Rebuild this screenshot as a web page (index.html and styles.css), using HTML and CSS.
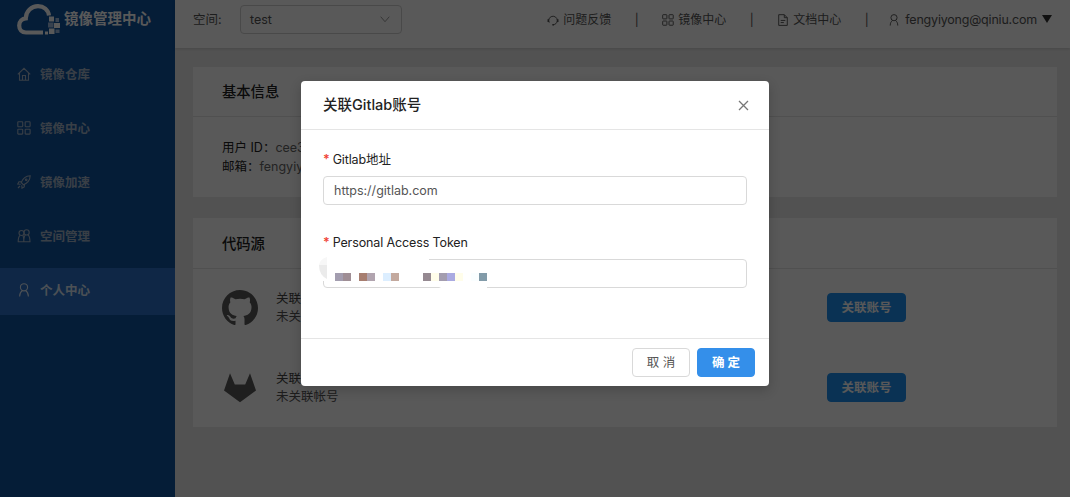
FILE: index.html
```
<!DOCTYPE html>
<html lang="zh-CN">
<head>
<meta charset="utf-8">
<title>镜像管理中心</title>
<link rel="stylesheet" href="styles.css">
</head>
<body>
<svg class="defs" width="0" height="0">
  <symbol id="i-grid" viewBox="0 0 14 14"><rect x=".8" y=".8" width="4.9" height="4.9" rx=".6"/><rect x="8.2" y=".8" width="4.9" height="4.9" rx=".6"/><rect x=".8" y="8.2" width="4.9" height="4.9" rx=".6"/><rect x="8.2" y="8.2" width="4.9" height="4.9" rx=".6"/></symbol>
  <symbol id="i-user" viewBox="0 0 14 14"><circle cx="7" cy="4.300" r="3.600"/><path d="M2.600 13.500c0-3 1-4.800 2.800-6M11.400 13.500c0-3-1-4.800-2.800-6"/></symbol>
</svg>
<div class="app">
  <aside class="sidebar">
    <div class="brand">
      <svg class="brand-logo" viewBox="0 0 44 32">
        <path class="cloud" d="M26 28.500H9C4.800 28.500 2.200 25.500 2.200 21.500c0-4.300 3-7 6.600-7.200C9 7 14.500 2.200 21 2.200c5.600 0 10 3.500 11 9.300"/>
        <path class="bits" d="M32 12.500h5v5h-5zM37 19h6v5h-6zM32 24.500h5.500v5.500H32zM28 27.500h3v3h-3z"/>
        <path class="bits-soft" d="M31 18.500h5.500v5H31zM38.500 14h3.500v4h-3.500zM38.500 25.500h4v3.500h-4z"/>
      </svg>
      <span class="brand-name">镜像管理中心</span>
    </div>
    <nav class="menu">
      <a class="menu-item"><svg class="icon" viewBox="0 0 14 14"><path d="M.8 7.400 7 1.300l6.200 6.100M2.500 6v7.200h9V6M5.500 13V8.500h3V13"/></svg><span>镜像仓库</span></a>
      <a class="menu-item"><svg class="icon"><use href="#i-grid"/></svg><span>镜像中心</span></a>
      <a class="menu-item"><svg class="icon" viewBox="0 0 14 14"><path d="M4.200 7.500C5.800 3.500 9 1 13.200.8c-.2 4.200-2.700 7.400-6.700 9zM4.500 6.500 2 6.800.8 9l3 .2M7.500 9.500 7.200 12 5 13.200l-.2-3M3 11l-2 2"/><circle cx="9.200" cy="4.800" r=".8"/></svg><span>镜像加速</span></a>
      <a class="menu-item"><svg class="icon" viewBox="0 0 14 14"><circle cx="4.500" cy="4" r="2.500"/><circle cx="9.600" cy="3.400" r="2.600"/><path d="M3 6.500C1.700 7.500 1.200 9 1.200 12.800h5.600C6.800 9 6.600 7.500 5.800 6.400M8.200 6c-1 1.300-1.400 3-1.400 6.800H13c0-3.800-.5-5.500-1.900-7"/></svg><span>空间管理</span></a>
      <a class="menu-item active"><svg class="icon"><use href="#i-user"/></svg><span>个人中心</span></a>
    </nav>
  </aside>
  <div class="main">
    <header class="topbar">
      <span class="space-label">空间:</span>
      <div class="select"><span>test</span><svg class="chevron" viewBox="0 0 10 7"><path d="M.7.7 5 5.700 9.300.7"/></svg></div>
      <div class="links">
        <a class="link"><svg class="icon" viewBox="0 0 14 14"><path d="M2.600 10A5 5 0 1 1 12 7.500C11.900 10.500 10 12.300 7 12.500"/><path class="thick" d="M1.500 6v3.200M12.500 6v3.200M6.200 12.500h2"/></svg>问题反馈</a>
        <i class="bar">|</i>
        <a class="link"><svg class="icon"><use href="#i-grid"/></svg>镜像中心</a>
        <i class="bar">|</i>
        <a class="link"><svg class="icon" viewBox="0 0 14 14"><path d="M2 .8h6.500L12 4.300v9H2zM8.500.8v3.500H12M4.300 7.500h5.400M4.300 10h3.700"/></svg>文档中心</a>
        <i class="bar">|</i>
        <a class="link user"><svg class="icon"><use href="#i-user"/></svg><span class="email">fengyiyong@qiniu.com</span><b class="caret"></b></a>
      </div>
    </header>
    <section class="card">
      <h2 class="card-title">基本信息</h2>
      <div class="info">
        <p><span class="key">用户 ID：</span>cee3</p>
        <p><span class="key">邮箱：</span>fengyiy</p>
      </div>
    </section>
    <section class="card sources">
      <h2 class="card-title">代码源</h2>
      <div class="source">
        <svg class="source-logo" viewBox="0 0 16 16"><path d="M8 0C3.580 0 0 3.580 0 8c0 3.540 2.290 6.530 5.470 7.590.4.070.55-.17.55-.38 0-.19-.01-.82-.01-1.490-2.010.37-2.530-.49-2.690-.94-.09-.23-.48-.94-.82-1.130-.28-.15-.68-.52-.01-.53.63-.01 1.080.58 1.230.82.72 1.210 1.870.87 2.330.66.07-.52.28-.87.51-1.070-1.780-.2-3.640-.89-3.640-3.950 0-.87.31-1.590.82-2.150-.08-.2-.36-1.020.08-2.120 0 0 .67-.21 2.200.82.64-.18 1.320-.27 2-.27s1.360.09 2 .27c1.530-1.040 2.200-.82 2.200-.82.44 1.100.16 1.920.08 2.120.51.56.82 1.270.82 2.150 0 3.070-1.870 3.750-3.650 3.950.29.25.54.73.54 1.480 0 1.070-.01 1.930-.01 2.200 0 .21.15.46.55.38A8.010 8.010 0 0 0 16 8c0-4.420-3.580-8-8-8z"/></svg>
        <div class="source-text"><p>关联</p><p>未关</p></div>
        <button class="btn primary link-btn">关联账号</button>
      </div>
      <div class="source">
        <svg class="source-logo" viewBox="0 0 36 36"><path d="M8 3.200 2 20.500 18 32.300l16-11.800L28 3.200 23.200 14.500H12.800z"/></svg>
        <div class="source-text"><p>关联</p><p>未关联帐号</p></div>
        <button class="btn primary link-btn">关联账号</button>
      </div>
    </section>
  </div>
</div>
<div class="mask">
  <div class="modal">
    <div class="modal-head"><span>关联Gitlab账号</span><svg class="close" viewBox="0 0 11 11"><path d="m1 1 9 9M10 1l-9 9"/></svg></div>
    <div class="modal-body">
      <label class="label"><em>*</em>Gitlab地址</label>
      <div class="input">https://gitlab.com</div>
      <label class="label second"><em>*</em>Personal Access Token</label>
      <div class="input token">
        <svg class="mosaic" width="180" height="36" viewBox="0 0 180 36">
          <path fill="#fff" d="M8 0h102v4H8zM2 2h6v22H2zM116 28q20-3 52 0v4h-44z"/>
          <path fill="#f7f7f7" d="M8 0v8H0Q1 2 8 0z"/><path fill="#ebebeb" d="M0 8h8v14Q0 18 0 8z"/>
          <path fill="#a39daf" d="M16 16h8v8h-8zM120 16h8v8h-8z"/><path fill="#9f8e95" d="M24 16h8v8h-8z"/>
          <path fill="#a77e70" d="M40 16h8v8h-8z"/><path fill="#b1a4af" d="M48 16h8v8h-8z"/>
          <path fill="#dceeff" d="M64 16h8v8h-8z"/><path fill="#c3a99e" d="M72 16h8v8h-8z"/>
          <path fill="#958991" d="M104 16h8v8h-8z"/><path fill="#fffdea" d="M112 16h8v8h-8zM136 16h8v8h-8z"/>
          <path fill="#aaaae1" d="M128 16h8v8h-8z"/><path fill="#fafeff" d="M152 16h8v8h-8z"/><path fill="#829ba9" d="M160 16h8v8h-8z"/>
        </svg>
      </div>
    </div>
    <div class="modal-foot"><button class="btn">取 消</button><button class="btn primary">确 定</button></div>
  </div>
</div>
</body>
</html>
```
FILE: styles.css
```
* { box-sizing: border-box; }
body { margin: 0; height: 497px; overflow: hidden; font: 12.5px/18px Inter, "Noto Sans CJK SC", sans-serif; color: #333; }
p, h2 { margin: 0; }
svg { fill: none; stroke: currentColor; flex: none; }
.defs { position: absolute; }
.icon { width: 14px; height: 14px; stroke-width: 1.1; }
.thick { stroke-width: 1.8; }
.app { display: flex; height: 497px; }
.sidebar { width: 175px; background: #0f539f; color: #a3b4c8; }
.brand { display: flex; align-items: center; height: 40px; padding-left: 17px; color: #fff; }
.brand-logo { width: 44px; height: 32px; }
.cloud { stroke-width: 4.200; }
.bits { fill: currentColor; stroke: none; }
.bits-soft { fill: #9fbbe0; stroke: none; }
.brand-name { margin: -2px 0 0 3px; font-size: 14.500px; font-weight: 700; white-space: nowrap; }
.menu { display: flex; flex-direction: column; gap: 7px; padding-top: 12px; }
.menu-item { display: flex; align-items: center; gap: 9px; height: 47px; padding: 0 0 3px 17px; font-weight: 700; }
.menu-item span { padding-top: 2px; }
.menu-item.active { background: #2c71c8; color: #dbe6f4; }
.main { flex: 1; min-width: 0; background: #ececec; }
.topbar { display: flex; align-items: center; height: 48px; padding: 0 18px 9px; background: #fff; box-shadow: 0 1px 3px rgba(0,0,0,.15); }
.space-label { width: 47px; color: #555; }
.select { display: flex; align-items: center; justify-content: space-between; width: 162px; height: 29px; padding: 0 11px 0 9px; border: 1px solid #d0d0d0; border-radius: 4px; color: #555; }
.chevron { width: 10px; height: 7px; color: #999; }
.links { display: flex; align-items: center; margin-left: auto; font-size: 12px; color: #555; }
.link { display: flex; align-items: center; gap: 4px; }
.link .icon { width: 12px; height: 12px; }
.bar { width: 51px; padding-top: 1px; text-align: center; font-style: normal; }
.user { margin-left: -4px; gap: 5px; }
.email { font-size: 12.500px; letter-spacing: -.2px; }
.caret { margin-bottom: 2px; border: 5.500px solid transparent; border-top: 8px solid #333; border-bottom: 0; }
.card { margin: 19px 13px 0 18px; height: 130px; background: #fff; }
.card + .card { margin-top: 21px; height: 209px; }
.card-title { height: 50px; padding-left: 29px; border-bottom: 1px solid #e4e4e4; font-size: 14.300px; font-weight: 500; line-height: 50px; color: #222; }
.sources .card-title { height: 51px; line-height: 51px; }
.info { padding: 21px 29px; line-height: 19px; color: #666; }
.key { color: #222; }
.source { display: flex; align-items: center; height: 80px; padding: 0 0 3px 29px; }
.source-logo { width: 36px; height: 36px; color: #5a5a5a; fill: currentColor; stroke: none; }
.source-text { width: 569px; padding: 1px 0 0 18px; color: #444; }
.source-text p + p { color: #555; }
.btn { height: 29px; width: 58px; padding: 0; border: 1px solid #d9d9d9; border-radius: 4px; background: #fff; color: #555; font: inherit; line-height: 27px; }
.btn.primary { border-color: #348fea; background: #348fea; color: #fff; font-weight: 700; }
.btn.link-btn { width: 79px; margin-bottom: 1px; border-color: #1e90f0; background: #1e90f0; }
.mask { position: absolute; inset: 0; display: flex; justify-content: center; align-items: flex-start; padding-top: 81px; background: rgba(0,0,0,.65); }
.modal { display: flex; flex-direction: column; width: 468px; height: 305px; border-radius: 4px; background: #fff; box-shadow: 0 4px 12px rgba(0,0,0,.2); }
.modal-head { display: flex; align-items: center; justify-content: space-between; height: 49px; padding: 0 20px 0 22px; border-bottom: 1px solid #e5e5e5; font-size: 14.500px; font-weight: 500; color: #222; }
.close { width: 11px; height: 11px; color: #777; stroke-width: 1.3; }
.modal-body { flex: 1; padding: 21px 22px 0; }
.label { display: block; height: 25px; letter-spacing: -.12px; color: #222; }
.label.second { margin-top: 29px; }
.label em { margin-right: 3px; color: #f04134; font-style: normal; font-weight: 600; }
.input { height: 29px; padding-left: 10px; border: 1px solid #d9d9d9; border-radius: 4px; line-height: 27px; color: #555; }
.token { position: relative; }
.mosaic { position: absolute; left: -5px; top: -3px; stroke: none; }
.modal-foot { display: flex; align-items: center; justify-content: flex-end; gap: 7px; height: 48px; padding-right: 14px; border-top: 1px solid #e5e5e5; }
```
